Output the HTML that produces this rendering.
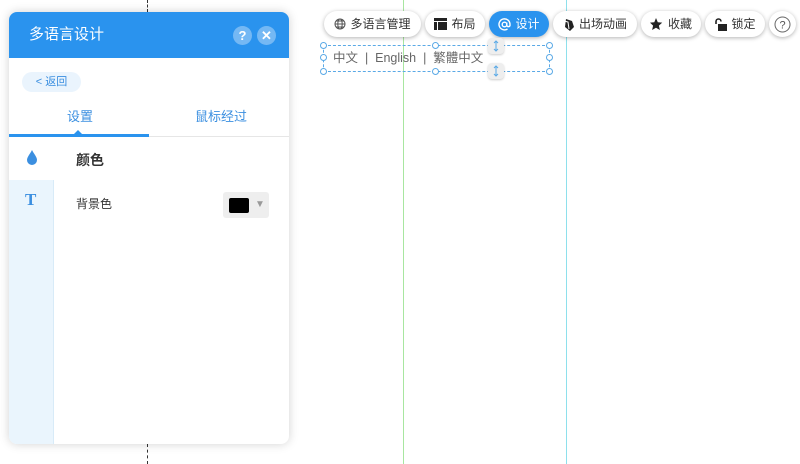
<!DOCTYPE html>
<html><head><meta charset="utf-8"><style>
*{box-sizing:border-box;margin:0;padding:0}
body{width:800px;height:464px;background:#fff;position:relative;overflow:hidden;font-family:"Liberation Sans","Noto Sans CJK SC",sans-serif;font-size:12px;color:#333}
.a{position:absolute}
.panel{left:9px;top:12px;width:280px;height:432px;background:#fff;border-radius:8px;box-shadow:0 0 10px rgba(0,0,0,.18);overflow:hidden}
.hd{left:0;top:0;width:280px;height:46px;background:#2a93ee;color:#fff;font-size:15px;line-height:46px;padding-left:20px}
.ic{width:19px;height:19px;border-radius:50%;background:rgba(255,255,255,.35);color:#fff;text-align:center;line-height:19px;font-size:13px;font-weight:bold}
.btn{height:26px;top:11px;border-radius:13px;background:#fff;box-shadow:0 1px 4px rgba(0,0,0,.3);font-size:12px;line-height:26px;text-align:center;color:#333;display:flex;align-items:center;justify-content:center;gap:4px}
.btn svg{display:block}
.h{width:7px;height:7px;border:1px solid #5aa9e6;border-radius:50%;background:#fff}
</style></head><body>
<div class="a" style="left:147px;top:0;height:12px;border-left:1px dashed #333"></div>
<div class="a" style="left:147px;top:444px;height:20px;border-left:1px dashed #333"></div>
<div class="a" style="left:403px;top:0;height:464px;border-left:1px solid #a8e6a0"></div>
<div class="a" style="left:566px;top:0;height:464px;border-left:1px solid #8ee0ec"></div>

<div class="a panel">
 <div class="a hd">多语言设计</div>
 <div class="a ic" style="left:224px;top:14px">?</div>
 <div class="a ic" style="left:248px;top:14px">✕</div>
 <div class="a" style="left:13px;top:60px;width:59px;height:20px;border-radius:10px;background:#eaf4fd;color:#3b8fe0;font-size:11px;line-height:20px;text-align:center">&lt; 返回</div>
 <div class="a" style="left:58px;top:94px;color:#3b8fe0;font-size:13px">设置</div>
 <div class="a" style="left:186px;top:94px;color:#3b8fe0;font-size:13px">鼠标经过</div>
 <div class="a" style="left:0;top:124px;width:280px;height:1px;background:#e6e6e6"></div>
 <div class="a" style="left:0;top:122px;width:140px;height:3px;background:#2a93ee"></div>
 <div class="a" style="left:65px;top:114px;width:0;height:0;border:4px solid transparent;border-bottom-color:#2a93ee"></div>
 <div class="a" style="left:0;top:168px;width:45px;height:264px;background:#eaf5fd;border-right:1px solid #d8ebf8"></div>
 <svg class="a" style="left:17px;top:138px" width="12" height="15" viewBox="0 0 12 15"><path d="M6 0C4 4 1 7 1 10a5 5 0 0 0 10 0C11 7 8 4 6 0z" fill="#3b8fe0"/></svg>
 <div class="a" style="left:16px;top:178px;color:#3b8fe0;font:bold 17px 'Liberation Serif',serif">T</div>
 <div class="a" style="left:67px;top:138px;font-size:14px;font-weight:bold;color:#333">颜色</div>
 <div class="a" style="left:67px;top:183px;font-size:12px">背景色</div>
 <div class="a" style="left:214px;top:180px;width:46px;height:26px;background:#eee;border-radius:3px"></div>
 <div class="a" style="left:220px;top:186px;width:20px;height:15px;background:#000;border-radius:2px"></div>
 <div class="a" style="left:246px;top:187px;color:#999;font-size:10px">▼</div>
</div>

<div class="a btn" style="left:324px;width:97px"><svg width="12" height="12" viewBox="0 0 12 12" fill="none" stroke="#555" stroke-width="1"><circle cx="6" cy="6" r="5"/><ellipse cx="6" cy="6" rx="2.2" ry="5"/><path d="M1 6h10M2 3h8M2 9h8"/></svg>多语言管理</div>
<div class="a btn" style="left:425px;width:60px"><svg width="13" height="12" viewBox="0 0 13 12"><rect x="0" y="0" width="13" height="3" fill="#222"/><rect x="0" y="4" width="3" height="8" fill="#222"/><rect x="4" y="4" width="9" height="8" fill="#222"/></svg>布局</div>
<div class="a btn" style="left:489px;width:60px;background:#2a93ee;color:#fff"><svg width="13" height="13" viewBox="0 0 13 13" fill="none" stroke="#fff" stroke-width="1.4"><circle cx="6.5" cy="6.5" r="2.3"/><path d="M8.8 4.5v3a1.7 1.7 0 0 0 3.2 0V6.5A5.5 5.5 0 1 0 9.5 11"/></svg>设计</div>
<div class="a btn" style="left:553px;width:84px"><svg width="12" height="13" viewBox="0 0 12 13"><path d="M3 1l6 2 2 6-4 4-5-4z" fill="#222"/><path d="M1 3l4 1 1 7" stroke="#fff" fill="none"/></svg>出场动画</div>
<div class="a btn" style="left:641px;width:60px"><svg width="14" height="13" viewBox="0 0 14 13"><path d="M6 0l1.8 4.2 4.4.4-3.3 3 1 4.4L6 9.7 2.1 12l1-4.4L0 4.6l4.3-.4z" fill="#222"/></svg>收藏</div>
<div class="a btn" style="left:705px;width:60px"><svg width="13" height="13" viewBox="0 0 13 13"><path d="M2 6V3.5a2.5 2.5 0 0 1 5 0" fill="none" stroke="#222" stroke-width="1.6"/><rect x="4" y="6" width="9" height="7" fill="#222"/></svg>锁定</div>
<div class="a btn" style="left:769px;width:27px;border-radius:50%"><svg width="17" height="17" viewBox="0 0 17 17"><circle cx="8.5" cy="8.5" r="7.5" fill="none" stroke="#666"/><text x="8.5" y="12.5" text-anchor="middle" font-size="11" fill="#555" font-family="Liberation Sans">?</text></svg></div>

<div class="a" style="left:323px;top:45px;width:227px;height:27px;border:1px dashed #5aa9e6"></div>
<div class="a" style="left:333px;top:47px;color:#666;font-size:12.5px">中文 &nbsp;| &nbsp;English &nbsp;| &nbsp;繁體中文</div>
<div class="a h" style="left:320px;top:42px"></div><div class="a h" style="left:432px;top:42px"></div><div class="a h" style="left:546px;top:42px"></div>
<div class="a h" style="left:320px;top:54px"></div><div class="a h" style="left:546px;top:54px"></div>
<div class="a h" style="left:320px;top:68px"></div><div class="a h" style="left:432px;top:68px"></div><div class="a h" style="left:546px;top:68px"></div>
<div class="a" style="left:488px;top:38px;width:16px;height:16px;background:#eee;border-radius:4px;box-shadow:0 1px 2px rgba(0,0,0,.2)"><svg width="16" height="16" viewBox="0 0 16 16" stroke="#5aa9e6" fill="none"><path d="M8 3v10M6 5l2-2 2 2M6 11l2 2 2-2"/></svg></div>
<div class="a" style="left:488px;top:63px;width:16px;height:16px;background:#eee;border-radius:4px;box-shadow:0 1px 2px rgba(0,0,0,.2)"><svg width="16" height="16" viewBox="0 0 16 16" stroke="#5aa9e6" fill="none"><path d="M8 3v10M6 5l2-2 2 2M6 11l2 2 2-2"/></svg></div>
</body></html>
